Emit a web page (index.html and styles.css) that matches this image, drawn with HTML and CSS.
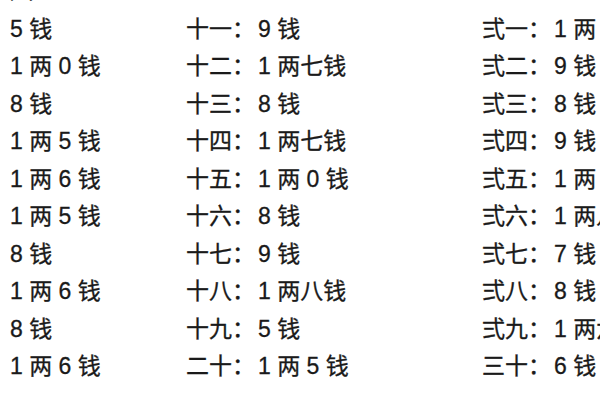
FILE: index.html
```html
<!DOCTYPE html>
<html lang="zh">
<head>
<meta charset="utf-8">
<link rel="stylesheet" href="styles.css">
</head>
<body>
<div class="table">
  <div class="cell">八</div><div class="cell"></div><div class="cell"></div>
  <div class="cell">5 钱</div><div class="cell"><span class="k">十一：</span>9 钱</div><div class="cell"><span class="k">弍一：</span>1 两 0 钱</div>
  <div class="cell">1 两 0 钱</div><div class="cell"><span class="k">十二：</span>1 两七钱</div><div class="cell"><span class="k">弍二：</span>9 钱</div>
  <div class="cell">8 钱</div><div class="cell"><span class="k">十三：</span>8 钱</div><div class="cell"><span class="k">弍三：</span>8 钱</div>
  <div class="cell">1 两 5 钱</div><div class="cell"><span class="k">十四：</span>1 两七钱</div><div class="cell"><span class="k">弍四：</span>9 钱</div>
  <div class="cell">1 两 6 钱</div><div class="cell"><span class="k">十五：</span>1 两 0 钱</div><div class="cell"><span class="k">弍五：</span>1 两 0 钱</div>
  <div class="cell">1 两 5 钱</div><div class="cell"><span class="k">十六：</span>8 钱</div><div class="cell"><span class="k">弍六：</span>1 两八钱</div>
  <div class="cell">8 钱</div><div class="cell"><span class="k">十七：</span>9 钱</div><div class="cell"><span class="k">弍七：</span>7 钱</div>
  <div class="cell">1 两 6 钱</div><div class="cell"><span class="k">十八：</span>1 两八钱</div><div class="cell"><span class="k">弍八：</span>8 钱</div>
  <div class="cell">8 钱</div><div class="cell"><span class="k">十九：</span>5 钱</div><div class="cell"><span class="k">弍九：</span>1 两六钱</div>
  <div class="cell">1 两 6 钱</div><div class="cell"><span class="k">二十：</span>1 两 5 钱</div><div class="cell"><span class="k">三十：</span>6 钱</div>
</div>
</body>
</html>
```
FILE: styles.css
```css
html, body {
  margin: 0;
  padding: 0;
  background: #ffffff;
  overflow: hidden;
  width: 600px;
  height: 400px;
}
.table {
  display: grid;
  grid-template-columns: 176px 296px 1fr;
  grid-auto-rows: 37.56px;
  align-items: center;
  padding-left: 10px;
  margin-top: -27px;
  font-family: "Liberation Sans", "Noto Sans CJK SC", sans-serif;
  font-size: 23px;
  color: #1a1a1a;
  -webkit-text-stroke: 0.3px #1a1a1a;
}
.cell {
  white-space: nowrap;
  line-height: 37.56px;
}
.k {
  margin-right: 3px;
}
```
